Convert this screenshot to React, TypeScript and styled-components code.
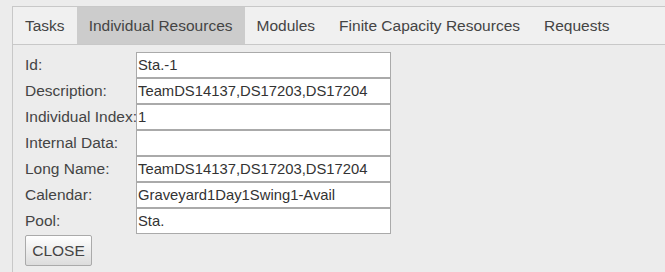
import React from "react";
import styled, { createGlobalStyle } from "styled-components";

const Global = createGlobalStyle`
  html, body {
    margin: 0;
    padding: 0;
    background: #ececec;
    font-family: "Liberation Sans", Arial, sans-serif;
    color: #333;
  }
`;

const Page = styled.div`
  padding: 6px 0 0 12px;
  height: 266px;
  overflow: hidden;
`;

const Panel = styled.div`
  border-left: 1px solid #c8c8c8;
  border-top: 1px solid #c8c8c8;
  height: 100%;
`;

const TabBar = styled.div`
  display: flex;
  background: #f0f0f0;
  border-bottom: 1px solid #c8c8c8;
  height: 37px;
`;

const Tab = styled.div<{ $active?: boolean }>`
  display: flex;
  align-items: center;
  padding: 0 12px;
  font-size: 15.5px;
  color: #444;
  background: ${(p) => (p.$active ? "#cccccc" : "transparent")};
  white-space: nowrap;
`;

const Body = styled.div`
  padding: 7px 0 0 12px;
`;

const Form = styled.div`
  display: grid;
  grid-template-columns: 111px 255px;
  grid-auto-rows: 26px;
`;

const Label = styled.label`
  display: flex;
  align-items: center;
  font-size: 15.5px;
  color: #444;
  white-space: nowrap;
`;

const Field = styled.input`
  box-sizing: border-box;
  width: 255px;
  height: 26px;
  margin: 0;
  border: 1px solid #aaa;
  background: #fff;
  padding: 0 1px;
  font-family: "Liberation Sans", Arial, sans-serif;
  font-size: 14.8px;
  color: #333;
  outline: none;
`;

const Button = styled.button`
  margin-top: 1px;
  width: 67px;
  height: 31px;
  border: 1px solid #aaa;
  border-radius: 2px;
  background: linear-gradient(#ffffff, #dcdcdc);
  font-family: "Liberation Sans", Arial, sans-serif;
  font-size: 15.5px;
  color: #444;
  padding: 0;
`;

const tabs = ["Tasks", "Individual Resources", "Modules", "Finite Capacity Resources", "Requests"];

const fields = [
  ["Id:", "Sta.-1"],
  ["Description:", "TeamDS14137,DS17203,DS17204"],
  ["Individual Index:", "1"],
  ["Internal Data:", ""],
  ["Long Name:", "TeamDS14137,DS17203,DS17204"],
  ["Calendar:", "Graveyard1Day1Swing1-Avail"],
  ["Pool:", "Sta."],
];

export default function App() {
  return (
    <>
      <Global />
      <Page>
        <Panel>
          <TabBar>
            {tabs.map((t) => (
              <Tab key={t} $active={t === "Individual Resources"}>
                {t}
              </Tab>
            ))}
          </TabBar>
          <Body>
            <Form>
              {fields.map(([label, value]) => (
                <React.Fragment key={label}>
                  <Label>{label}</Label>
                  <Field defaultValue={value} readOnly />
                </React.Fragment>
              ))}
            </Form>
            <Button>CLOSE</Button>
          </Body>
        </Panel>
      </Page>
    </>
  );
}
